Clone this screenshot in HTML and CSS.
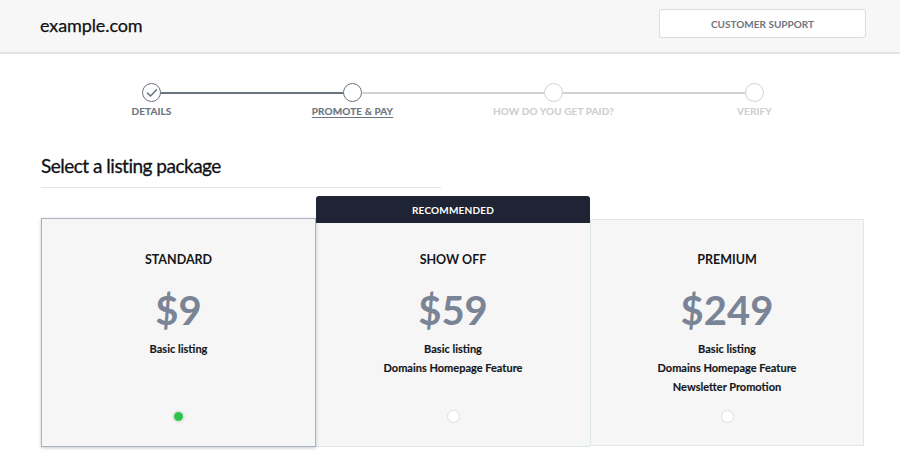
FILE: index.html
```html
<!DOCTYPE html>
<html>
<head>
<meta charset="utf-8">
<link rel="stylesheet" href="styles.css">
</head>
<body>
<header class="topbar">
  <div class="logo">example.com</div>
  <button class="support">CUSTOMER SUPPORT</button>
</header>

<section class="stepper">
  <div class="track">
    <div class="seg done"></div>
    <div class="seg"></div>
    <div class="seg"></div>
  </div>
  <div class="step done">
    <span class="dot">
      <svg width="12" height="10" viewBox="0 0 12 10"><path d="M1.5 5.2 L4.6 8 L10.5 1.8" fill="none" stroke="#6b7480" stroke-width="1.6" stroke-linecap="round" stroke-linejoin="round"/></svg>
    </span>
    <span class="label">DETAILS</span>
  </div>
  <div class="step active">
    <span class="dot"></span>
    <span class="label">PROMOTE &amp; PAY</span>
  </div>
  <div class="step">
    <span class="dot"></span>
    <span class="label">HOW DO YOU GET PAID?</span>
  </div>
  <div class="step">
    <span class="dot"></span>
    <span class="label">VERIFY</span>
  </div>
</section>

<main class="content">
  <h1 class="title">Select a listing package</h1>
  <div class="packages">
    <div class="col">
      <div class="card selected">
        <div class="name">STANDARD</div>
        <div class="price">$9</div>
        <ul class="features"><li>Basic listing</li></ul>
        <span class="radio on"></span>
      </div>
    </div>
    <div class="col mid">
      <div class="banner">RECOMMENDED</div>
      <div class="card middle">
        <div class="name">SHOW OFF</div>
        <div class="price">$59</div>
        <ul class="features"><li>Basic listing</li><li>Domains Homepage Feature</li></ul>
        <span class="radio"></span>
      </div>
    </div>
    <div class="col">
      <div class="card premium">
        <div class="name">PREMIUM</div>
        <div class="price">$249</div>
        <ul class="features"><li>Basic listing</li><li>Domains Homepage Feature</li><li>Newsletter Promotion</li></ul>
        <span class="radio"></span>
      </div>
    </div>
  </div>
</main>
</body>
</html>
```

FILE: styles.css
```css
* { box-sizing: border-box; }
html, body { margin: 0; padding: 0; background: #fff; }
body {
  font-family: Lato, "Open Sans", "Liberation Sans", sans-serif;
  color: #1b1d22;
  width: 900px;
  height: 468px;
  overflow: hidden;
}

.topbar {
  height: 54px;
  background: #f7f7f7;
  border-bottom: 2px solid #e4e4e4;
  display: flex;
  align-items: center;
  justify-content: space-between;
  padding: 0 34px 2px 40px;
}
.logo {
  font-size: 18px;
  font-weight: 400;
  color: #111215;
  letter-spacing: -0.1px;
  -webkit-text-stroke: 0.25px #111215;
}
.support {
  width: 207px;
  height: 29px;
  margin-top: -3px;
  background: #fff;
  border: 1px solid #dcdcdc;
  border-radius: 3px;
  font-family: inherit;
  font-size: 10px;
  font-weight: 700;
  color: #6e7480;
  letter-spacing: 0;
}

.stepper {
  position: relative;
  display: grid;
  grid-template-columns: repeat(4, 201px);
  margin: 29px 0 0 51px;
  height: 40px;
}
.track {
  position: absolute;
  left: 100px;
  top: 9px;
  width: 603px;
  display: flex;
}
.seg { flex: 1; height: 2px; background: #d2d2d2; }
.seg.done { background: #6b7480; }
.step {
  position: relative;
  display: flex;
  flex-direction: column;
  align-items: center;
}
.dot {
  width: 19px;
  height: 19px;
  border-radius: 50%;
  border: 1.5px solid #d2d2d2;
  background: #fff;
  display: flex;
  align-items: center;
  justify-content: center;
}
.step.done .dot, .step.active .dot { border-color: #6b7480; }
.label {
  margin-top: 3px;
  font-size: 10px;
  font-weight: 700;
  letter-spacing: 0.1px;
  color: #cfcfcf;
  -webkit-text-stroke: 0.15px currentColor;
}
.step.done .label, .step.active .label { color: #6b7480; }
.step.active .label { text-decoration: underline; text-underline-offset: 2px; }

.content { padding: 0 36px 0 41px; }
.title {
  margin: 31px 0 0;
  width: 400px;
  padding-bottom: 10px;
  border-bottom: 1px solid #e6e6e6;
  font-size: 19px;
  font-weight: 400;
  color: #111215;
  letter-spacing: -0.5px;
  -webkit-text-stroke: 0.3px #111215;
}

.packages {
  display: grid;
  grid-template-columns: 275px 274px 274px;
  margin-top: 8px;
}
.col { display: flex; flex-direction: column; }
.col:first-child { position: relative; z-index: 2; }
.banner {
  height: 27px;
  background: #1e2433;
  color: #fff;
  border-radius: 3px 3px 0 0;
  font-size: 10px;
  font-weight: 700;
  letter-spacing: 0.2px;
  display: flex;
  align-items: center;
  justify-content: center;
}
.card {
  background: #f6f6f6;
  display: flex;
  flex-direction: column;
  align-items: center;
  height: 229px;
  margin-top: 22px;
  padding-top: 33px;
}
.card.selected {
  border: 1.5px solid #a9b1bf;
  box-shadow: 0 1px 3px rgba(90, 100, 120, 0.35);
}
.card.middle {
  margin-top: 0;
  height: 224px;
  padding-top: 29px;
  border-bottom: 1px solid #dde5ea;
}
.card.premium {
  margin-top: 23px;
  height: 227px;
  border: 1px solid #dce8ea;
  padding-top: 32px;
}
.name {
  font-size: 12.5px;
  font-weight: 700;
  letter-spacing: 0;
  color: #15171b;
  line-height: 16px;
}
.price {
  margin-top: 18px;
  font-size: 40px;
  font-weight: 700;
  color: #7a8497;
  line-height: 48px;
}
.features {
  list-style: none;
  margin: 5px 0 0;
  padding: 0;
  text-align: center;
  height: 62px;
}
.features li {
  font-size: 11px;
  font-weight: 700;
  color: #15171b;
  line-height: 19px;
  -webkit-text-stroke: 0.15px #15171b;
}
.radio {
  margin-top: 9px;
  width: 13px;
  height: 13px;
  border-radius: 50%;
  border: 1px solid #dedede;
  background: #fff;
}
.radio.on {
  background: #2ec44a;
  border: 2px solid #e6e6e6;
}
```
